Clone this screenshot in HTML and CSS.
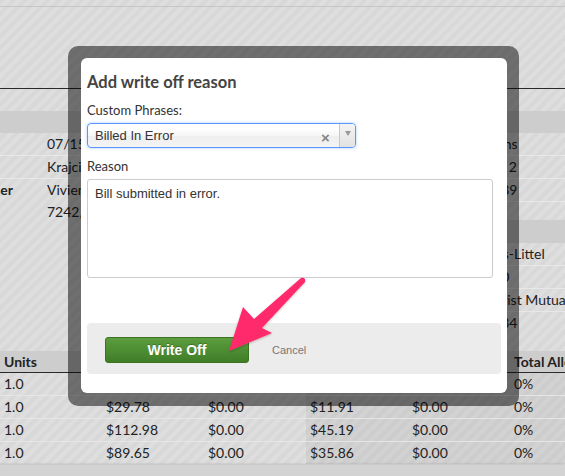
FILE: index.html
```html
<!DOCTYPE html>
<html lang="en">
<head>
    <meta charset="UTF-8">
    <meta name="viewport" content="width=device-width, initial-scale=1.0">
    <title>Add write off reason</title>
    <link rel="stylesheet" href="styles.css">
</head>
<body>
    <div class="page">
        <div class="top-strip"></div>
        <div class="claim-header"></div>

        <div class="details">
            <div class="info info-left">
                <div class="band"></div>
                <div class="info-row"><span class="label"></span><span class="value">07/15/2014</span></div>
                <div class="info-row"><span class="label"></span><span class="value">Krajcik, Bette</span></div>
                <div class="info-row tall"><span class="label">Provider</span><span class="value">Vivien Hand MD<br>7242, Elm St</span></div>
            </div>
            <div class="info info-right">
                <div class="band"></div>
                <div class="info-row"><span class="value">Plans</span></div>
                <div class="info-row"><span class="value">Ext 2</span></div>
                <div class="info-row"><span class="value">4039</span></div>
                <div class="band second"></div>
                <div class="info-row"><span class="value">Kris-Littel</span></div>
                <div class="info-row"><span class="value">410</span></div>
                <div class="info-row"><span class="value">Christ Mutual</span></div>
                <div class="info-row last"><span class="value">1234</span></div>
            </div>
        </div>

        <div class="lines">
            <div class="lines-head">
                <div>Units</div><div></div><div></div><div></div><div></div><div>Total Allowed</div>
            </div>
            <div class="lines-row">
                <div>1.0</div><div></div><div></div><div class="shade"></div><div class="shade"></div><div class="shade">0%</div>
            </div>
            <div class="lines-row">
                <div>1.0</div><div>$29.78</div><div>$0.00</div><div class="shade">$11.91</div><div class="shade">$0.00</div><div class="shade">0%</div>
            </div>
            <div class="lines-row">
                <div>1.0</div><div>$112.98</div><div>$0.00</div><div class="shade">$45.19</div><div class="shade">$0.00</div><div class="shade">0%</div>
            </div>
            <div class="lines-row">
                <div>1.0</div><div>$89.65</div><div>$0.00</div><div class="shade">$35.86</div><div class="shade">$0.00</div><div class="shade">0%</div>
            </div>
        </div>
        <div class="bottom-bar"></div>

        <div class="modal-frame">
            <div class="modal">
                <h2>Add write off reason</h2>
                <label class="field-label">Custom Phrases:</label>
                <div class="chosen">
                    <span class="chosen-text">Billed In Error</span>
                    <span class="chosen-clear">&#215;</span>
                    <span class="chosen-arrow"><b></b></span>
                </div>
                <label class="field-label reason-label">Reason</label>
                <div class="reason-box">Bill submitted in error.</div>
                <div class="modal-footer">
                    <button class="btn-write-off">Write Off</button>
                    <a class="cancel-link">Cancel</a>
                </div>
            </div>
        </div>

        <svg class="callout" viewBox="222 272 90 85" width="90" height="85">
            <defs>
                <filter id="soft" x="-20%" y="-20%" width="140%" height="140%">
                    <feDropShadow dx="0" dy="1" stdDeviation="1" flood-color="#000" flood-opacity="0.25"/>
                </filter>
            </defs>
            <path d="M301 278 L254 319 L243 307 L229 351 L272 333 L262 328 L305 282 Q306 277 301 278 Z" fill="#ff2c6c" filter="url(#soft)"/>
        </svg>
    </div>
</body>
</html>
```

FILE: styles.css
```css
body {
    margin: 0;
    font-family: 'Lato', sans-serif;
    color: #222;
}

.page {
    position: relative;
    width: 565px;
    height: 476px;
    overflow: hidden;
    font-size: 14px;
    background-color: #dadada;
    background-image: repeating-linear-gradient(135deg, #d8d8d8 0 4px, #dedede 4px 8px);
}

.top-strip {
    height: 6px;
    border-bottom: 1px solid #c6c6c6;
}

.claim-header {
    height: 81px;
    border-bottom: 1px solid #2a2a2a;
}

.details {
    display: flex;
    justify-content: space-between;
    align-items: flex-start;
    margin-top: 22px;
}

.info {
    overflow: hidden;
}

.band {
    height: 22px;
    background-color: #cdcdcd;
}

.band.second {
    height: 23px;
    margin-top: 18px;
}

/* left block is scrolled partly off screen and runs under the dialog */
.info-left {
    width: 121px;
    margin-left: -40px;
}

.info-right {
    width: 58px;
}

.info-row {
    display: grid;
    grid-template-columns: 87px 34px;
    height: 22px;
    line-height: 22px;
    border-bottom: 1px solid #e8e8e8;
    white-space: nowrap;
}

.info-left .value {
    overflow: hidden;
}

.info-row.tall {
    height: 45px;
    border-bottom: none;
}

.info-row.last {
    border-bottom: none;
}

.info-right .info-row {
    display: block;
}

.info-right .value {
    display: block;
    margin-left: -22px;
}

.label {
    font-weight: 700;
}

.lines {
    margin-top: 17px;
}

.lines-head,
.lines-row {
    display: grid;
    grid-template-columns: repeat(6, 102px);
    white-space: nowrap;
}

.lines-head {
    height: 21px;
    line-height: 21px;
    font-weight: 700;
    background-color: #cdcdcd;
    border-bottom: 1px solid #2a2a2a;
}

.lines-row {
    height: 22px;
    line-height: 22px;
    border-bottom: 1px solid #e6e6e6;
}

.lines-head div,
.lines-row div {
    padding-left: 4px;
}

.lines-row .shade {
    background-color: rgba(0, 0, 0, 0.05);
}

.bottom-bar {
    height: 14px;
    background-color: #d3d3d3;
    box-shadow: 0 -1px 2px rgba(0, 0, 0, 0.18);
}

/* modal */
.modal-frame {
    position: absolute;
    left: 68px;
    top: 46px;
    width: 451px;
    height: 360px;
    box-sizing: border-box;
    padding: 12px 12px 13px 13px;
    background-color: rgba(0, 0, 0, 0.5);
    border-radius: 10px;
}

.modal {
    height: 100%;
    box-sizing: border-box;
    padding: 14px 6px 0 6px;
    background-color: #fff;
    border-radius: 6px;
    display: flex;
    flex-direction: column;
    align-items: flex-start;
}

.modal h2 {
    margin: 0;
    font-size: 16.5px;
    line-height: 20px;
    font-weight: 700;
    color: #444;
}

.field-label {
    display: block;
    margin-top: 10px;
    font-size: 13px;
    line-height: 16px;
    color: #333;
}

.reason-label {
    margin-top: 10px;
}

.chosen {
    margin-top: 5px;
    width: 269px;
    height: 25px;
    box-sizing: border-box;
    display: flex;
    align-items: center;
    border: 1px solid #5897fb;
    border-radius: 4px;
    background: linear-gradient(#fff 20%, #f6f6f6 50%, #eee 52%, #f4f4f4 100%);
    box-shadow: 0 0 3px rgba(88, 151, 251, 0.5);
    font-family: 'Liberation Sans', Arial, sans-serif;
    font-size: 13px;
    color: #333;
}

.chosen-text {
    flex: 1;
    padding-left: 7px;
}

.chosen-clear {
    width: 14px;
    margin-right: 4px;
    margin-top: 3px;
    font-size: 15px;
    font-weight: 700;
    color: #888;
}

.chosen-arrow {
    width: 16px;
    height: 100%;
    display: flex;
    justify-content: center;
    padding-top: 7px;
    box-sizing: border-box;
    border-left: 1px solid #c8c8c8;
    background: linear-gradient(#f4f4f4, #e2e2e2);
    border-radius: 0 3px 3px 0;
}

.chosen-arrow b {
    width: 0;
    height: 0;
    border-left: 3px solid transparent;
    border-right: 3px solid transparent;
    border-top: 5px solid #999;
}

.reason-box {
    margin-top: 5px;
    width: 406px;
    height: 99px;
    box-sizing: border-box;
    padding: 6px 7px;
    border: 1px solid #ccc;
    border-radius: 3px;
    font-family: 'Liberation Sans', Arial, sans-serif;
    font-size: 13px;
    color: #333;
}

.modal-footer {
    align-self: stretch;
    margin-top: 45px;
    height: 51px;
    box-sizing: border-box;
    padding: 14px 18px 0;
    background-color: #ececec;
    border-radius: 4px;
    display: flex;
    align-items: flex-start;
}

.btn-write-off {
    width: 144px;
    height: 26px;
    border: 1px solid #3b7322;
    border-radius: 3px;
    background: linear-gradient(#5c9d3f, #3f7e27);
    color: #fff;
    font-family: 'Liberation Sans', Arial, sans-serif;
    font-size: 14px;
    font-weight: 700;
    text-shadow: 0 -1px 0 rgba(0, 0, 0, 0.25);
}

.cancel-link {
    margin-left: 23px;
    line-height: 26px;
    font-family: 'Liberation Sans', Arial, sans-serif;
    font-size: 11px;
    color: #777;
}

.callout {
    position: absolute;
    left: 222px;
    top: 272px;
}
```
